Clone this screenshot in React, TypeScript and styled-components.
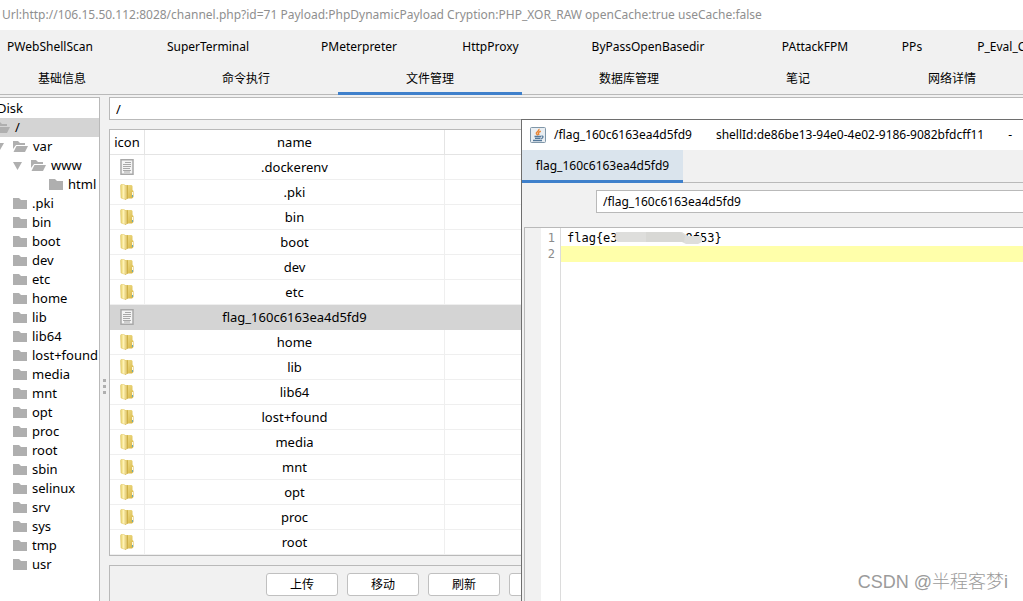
import React from "react";
import styled, { createGlobalStyle, css } from "styled-components";

const Global = createGlobalStyle`
  * { box-sizing: border-box; }
  body {
    margin: 0;
    overflow: hidden;
    background: #f1f1f1;
    color: #000;
    font: 13px/18px "Noto Sans", "Noto Sans CJK SC", sans-serif;
  }
  button, input { font: inherit; color: inherit; }
`;

const Page = styled.main`
  position: relative;
  display: flex;
  flex-direction: column;
  height: 100vh;
  overflow: hidden;
`;

const TitleBar = styled.header`
  flex: none;
  height: 30px;
  padding: 6px 2px;
  background: #fff;
  color: #8f8f8f;
  font-size: 12px;
  white-space: nowrap;
`;

const Tabs = styled.nav`
  flex: none;
  height: 65px;
  padding-top: 1px;
  overflow: hidden;
  box-shadow: inset 0 -1px #b9b9b9;
  margin-bottom: 2px;
`;

const TabRow = styled.div`
  display: flex;
  margin-left: -30px;
`;

const Tab = styled.button<{ $width: number; $active?: boolean }>`
  flex: none;
  width: ${(p) => p.$width}px;
  height: 32px;
  padding: 0;
  border: 0;
  background: none;
  font-size: 12px;
  white-space: nowrap;
  ${(p) => p.$active && css`box-shadow: inset 0 -3px #3f80cb;`}
`;

const Body = styled.div`
  flex: 1;
  min-height: 0;
  display: flex;
`;

const TreePanel = styled.aside`
  flex: none;
  width: 100px;
  overflow: hidden;
  background: #fff;
  border: solid #b9b9b9;
  border-width: 1px 1px 0 0;
  padding-top: 1px;
`;

const TreeRow = styled.div<{ $depth: number; $selected?: boolean }>`
  display: flex;
  align-items: center;
  height: 19px;
  margin-left: -23px;
  padding-left: ${(p) => p.$depth * 18}px;
  background: ${(p) => (p.$selected ? "#d4d4d4" : "none")};
  white-space: nowrap;
  svg { flex: none; }
`;

const Arrow = styled.span`
  flex: none;
  display: flex;
  width: 18px;
`;

const Label = styled.span<{ $root?: boolean }>`
  margin-left: ${(p) => (p.$root ? 2 : 5)}px;
  padding-bottom: 2px;
`;

const Splitter = styled.div`
  flex: none;
  width: 9px;
  display: flex;
  flex-direction: column;
  align-items: center;
  justify-content: center;
  gap: 3px;
  padding-top: 75px;
`;

const Dot = styled.i`
  width: 3px;
  height: 3px;
  background: #afafaf;
`;

const Main = styled.section`
  flex: 1;
  min-width: 0;
  display: flex;
  flex-direction: column;
  gap: 9px;
`;

const PathInput = styled.input`
  flex: none;
  width: 100%;
  height: 23px;
  padding: 0 6px;
  border: 1px solid #b9b9b9;
  border-right: 0;
  background: #fff;
  outline: 0;
`;

const TableBox = styled.div`
  flex: 1;
  min-height: 0;
  overflow: hidden;
  background: #fff;
  border: 1px solid #b9b9b9;
`;

const Table = styled.table`
  width: 100%;
  table-layout: fixed;
  border-collapse: separate;
  border-spacing: 0;
  th, td {
    height: 25px;
    padding: 0;
    border: solid #efefef;
    border-width: 0 1px 1px 0;
    font-weight: normal;
    text-align: center;
  }
  th { border-color: #e4e4e4; }
  td svg { display: block; margin: 0 auto; }
`;

const FileRow = styled.tr<{ $selected?: boolean }>`
  ${(p) => p.$selected && css`
    background: #d4d4d4;
    td { border-color: #d4d4d4; }
  `}
`;

const Footer = styled.footer`
  flex: none;
  display: flex;
  gap: 9px;
  height: 36px;
  padding: 7px 0 0 156px;
  border: solid #b9b9b9;
  border-width: 1px 0 0 1px;
`;

const Button = styled.button`
  flex: none;
  width: 72px;
  height: 23px;
  padding: 0;
  border: 1px solid #c0c0c0;
  border-radius: 3px;
  background: #fff;
  font-size: 12px;
  line-height: 18px;
`;

const Window = styled.section`
  position: absolute;
  top: 119px;
  left: 521px;
  right: 0;
  bottom: 0;
  display: flex;
  flex-direction: column;
  background: #f1f1f1;
  border: solid #6e6e6e;
  border-width: 1px 0 0 1px;
  font-size: 12px;
`;

const WindowTitle = styled.header`
  flex: none;
  display: flex;
  align-items: center;
  height: 30px;
  padding-left: 8px;
  overflow: hidden;
  background: #fff;
  white-space: nowrap;
  svg { flex: none; }
`;

const TitleText = styled.span<{ $gap: number }>`
  flex: none;
  margin-left: ${(p) => p.$gap}px;
`;

const WindowTabs = styled.nav`
  flex: none;
  height: 33px;
  border-bottom: 1px solid #b9b9b9;
`;

const WindowTab = styled.button`
  width: 161px;
  height: 33px;
  padding: 2px 0 0;
  border: 0;
  border-bottom: 3px solid #3f80cb;
  background: #dae4ed;
`;

const WindowPath = styled.div`
  flex: none;
  display: flex;
  padding: 7px 0 14px 74px;
`;

const Editor = styled.div`
  flex: 1;
  display: flex;
  margin-left: 2px;
  background: #fff;
  border: solid #b9b9b9;
  border-width: 1px 0 0 1px;
  font: 12px/16px "DejaVu Sans Mono", monospace;
`;

const FoldMargin = styled.div`
  width: 16px;
  background: #f1f1f1;
`;

const Gutter = styled.div`
  width: 20px;
  padding: 2px 5px 0 0;
  border-right: 1px solid #dcdcdc;
  color: #8b8b8b;
  text-align: right;
`;

const Code = styled.div`
  flex: 1;
  padding-top: 2px;
`;

const CodeLine = styled.div<{ $current?: boolean }>`
  position: relative;
  display: flex;
  height: 16px;
  padding-left: 6px;
  background: ${(p) => (p.$current ? "#ffffaa" : "none")};
`;

const Hidden = styled.span`
  width: 68px;
`;

const Smudge = styled.svg`
  position: absolute;
  left: 53px;
  top: 0;
`;

const Watermark = styled.div`
  position: absolute;
  right: 15px;
  bottom: 6px;
  color: #9b9b9b;
  font: 300 18px/26px "Liberation Sans", "Noto Sans CJK SC", sans-serif;
`;

const FolderIcon = () => (
  <svg width="14" height="11" viewBox="0 0 14 11">
    <path d="M0 0H6L8 2H14V11H0Z" fill="#afafaf" />
  </svg>
);

const OpenFolderIcon = () => (
  <svg width="15" height="11" viewBox="0 0 15 11">
    <path d="M0 8V0H5L7 2H12V4H3Z" fill="#afafaf" />
    <path d="M3.5 5H15L12 11H0.5Z" fill="#afafaf" />
  </svg>
);

const DownArrow = () => (
  <svg width="9" height="8" viewBox="0 0 9 8">
    <path d="M0 0H9L4.5 8Z" fill="#afafaf" />
  </svg>
);

const DocumentIcon = () => (
  <svg width="14" height="16" viewBox="0 0 14 16">
    <rect x="1" y="0.75" width="12" height="14.5" fill="#f4f4f4" stroke="#a8a8a8" strokeWidth="1.5" />
    <path d="M5 3.5H11M3 5.5H11M3 7.5H11M3 9.5H10M3 11.5H11M4 13H10" stroke="#a8a8a8" />
  </svg>
);

const YellowFolderIcon = () => (
  <svg width="14" height="16" viewBox="0 0 14 16">
    <defs>
      <linearGradient id="flap" x1="0" x2="1">
        <stop offset="0" stopColor="#e6cf66" />
        <stop offset="0.6" stopColor="#fff3b4" />
        <stop offset="1" stopColor="#e9d585" />
      </linearGradient>
      <linearGradient id="back" x1="0" x2="1" y2="1">
        <stop offset="0" stopColor="#f3e391" />
        <stop offset="1" stopColor="#d5b23f" />
      </linearGradient>
    </defs>
    <path d="M5 1H11.5L12.5 2V6L13.5 7V13L12 14.5H6Z" fill="url(#back)" />
    <path d="M0.5 1.5L1 0.5H4L5.5 1.5V15.5L1 14Z" fill="url(#flap)" stroke="#dfc463" strokeWidth="0.5" />
    <path d="M5 2L8 1V14.5L5 16Z" fill="#cfb048" />
    <path d="M5.2 2L6.5 1.6V15L5.2 15.6Z" fill="#f1e09a" />
    <path d="M12.5 8V11" stroke="#fbf8e4" />
    <path d="M12.5 11V13" stroke="#6aa9b4" />
  </svg>
);

const JavaIcon = () => (
  <svg width="16" height="16" viewBox="0 0 16 16">
    <rect x="0.5" y="0.5" width="15" height="15" rx="1" fill="#e9eef2" stroke="#8097a9" />
    <path d="M8.8 2C10 4 5.6 4.8 6.4 6.6L7.8 8.4M10.8 4.2C8 5.2 8 6 9 8" fill="none" stroke="#ea8532" strokeWidth="1.5" />
    <path d="M4.5 9.5H11M5 11.3H10.5M3 13.5H12M11.5 9C14 9 13 11 11.2 11.6" fill="none" stroke="#55799a" strokeWidth="1.3" />
  </svg>
);

const topTabs: [string, number][] = [
  ["PWebShellScan", 160], ["SuperTerminal", 156], ["PMeterpreter", 146], ["HttpProxy", 117],
  ["ByPassOpenBasedir", 198], ["PAttackFPM", 136], ["PPs", 58], ["P_Eval_Code", 142],
];
const mainTabs: [string, number][] = [
  ["基础信息", 184], ["命令执行", 184], ["文件管理", 184], ["数据库管理", 214], ["笔记", 124], ["网络详情", 184],
];
const folders = [".pki", "bin", "boot", "dev", "etc", "home", "lib", "lib64", "lost+found", "media", "mnt",
  "opt", "proc", "root", "sbin", "selinux", "srv", "sys", "tmp", "usr"];
const flagFile = "flag_160c6163ea4d5fd9";
const files = [".dockerenv", ".pki", "bin", "boot", "dev", "etc", flagFile, "home", "lib", "lib64",
  "lost+found", "media", "mnt", "opt", "proc", "root"];

const Node = ({ name, depth, open, selected }: { name: string; depth: number; open?: boolean; selected?: boolean }) => (
  <TreeRow $depth={depth} $selected={selected}>
    <Arrow>{open && <DownArrow />}</Arrow>
    {open ? <OpenFolderIcon /> : <FolderIcon />}
    <Label>{name}</Label>
  </TreeRow>
);

export default function App() {
  return (
    <>
      <Global />
      <Page>
        <TitleBar>
          Url:http://106.15.50.112:8028/channel.php?id=71 Payload:PhpDynamicPayload Cryption:PHP_XOR_RAW openCache:true useCache:false
        </TitleBar>
        <Tabs>
          <TabRow>{topTabs.map(([t, w]) => <Tab key={t} $width={w}>{t}</Tab>)}</TabRow>
          <TabRow>{mainTabs.map(([t, w]) => <Tab key={t} $width={w} $active={t === "文件管理"}>{t}</Tab>)}</TabRow>
        </Tabs>
        <Body>
          <TreePanel>
            <TreeRow $depth={1}><Label $root>Disk</Label></TreeRow>
            <Node name="/" depth={0} open selected />
            <Node name="var" depth={1} open />
            <Node name="www" depth={2} open />
            <Node name="html" depth={3} />
            {folders.map((f) => <Node key={f} name={f} depth={1} />)}
          </TreePanel>
          <Splitter><Dot /><Dot /><Dot /></Splitter>
          <Main>
            <PathInput aria-label="Path" defaultValue="/" />
            <TableBox>
              <Table>
                <colgroup>
                  <col style={{ width: 35 }} />
                  <col style={{ width: 300 }} />
                  <col />
                </colgroup>
                <thead><tr><th>icon</th><th>name</th><th /></tr></thead>
                <tbody>
                  {files.map((f) => (
                    <FileRow key={f} $selected={f === flagFile}>
                      <td>{f === ".dockerenv" || f === flagFile ? <DocumentIcon /> : <YellowFolderIcon />}</td>
                      <td>{f}</td>
                      <td />
                    </FileRow>
                  ))}
                </tbody>
              </Table>
            </TableBox>
            <Footer>
              <Button>上传</Button>
              <Button>移动</Button>
              <Button>刷新</Button>
              <Button aria-label="More" />
            </Footer>
          </Main>
        </Body>
        <Window>
          <WindowTitle>
            <JavaIcon />
            <TitleText $gap={8}>/{flagFile}</TitleText>
            <TitleText $gap={24}>shellId:de86be13-94e0-4e02-9186-9082bfdcff11</TitleText>
            <TitleText $gap={24}>-</TitleText>
          </WindowTitle>
          <WindowTabs><WindowTab>{flagFile}</WindowTab></WindowTabs>
          <WindowPath><PathInput aria-label="File path" defaultValue={"/" + flagFile} /></WindowPath>
          <Editor>
            <FoldMargin />
            <Gutter><div>1</div><div>2</div></Gutter>
            <Code>
              <CodeLine>
                <span>{"flag{e3"}</span><Hidden /><span>{"9f53}"}</span>
                <Smudge width="90" height="16" viewBox="0 0 90 16">
                  <path d="M2 2H68L74 6H88V12L84 14H72L68 12H4L1 9Z" fill="#dededc" />
                  <path d="M32 2H66L71 6L70 12H32Z" fill="#d8d8d5" />
                </Smudge>
              </CodeLine>
              <CodeLine $current />
            </Code>
          </Editor>
        </Window>
        <Watermark>CSDN @半程客梦i</Watermark>
      </Page>
    </>
  );
}
